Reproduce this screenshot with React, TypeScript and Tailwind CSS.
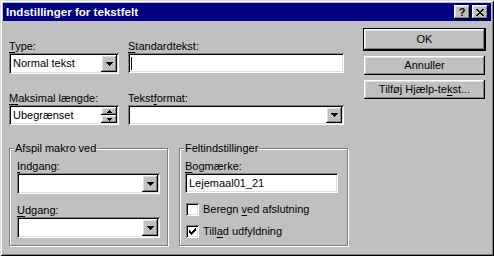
import { ReactElement, ReactNode } from "react";

const raised =
  "shadow-[inset_-1px_-1px_0_#000,inset_1px_1px_0_#fff,inset_-2px_-2px_0_#808080,inset_2px_2px_0_#dfdfdf]";
const sunken =
  "shadow-[inset_1px_1px_0_#808080,inset_-1px_-1px_0_#fff,inset_2px_2px_0_#000,inset_-2px_-2px_0_#dfdfdf]";
const etched = "shadow-[inset_1px_1px_0_#fff,1px_1px_0_#fff]";

const Key = (props: { children: ReactNode }): ReactElement => (
  <span className="underline underline-offset-[2px]">{props.children}</span>
);

const Label = (props: { children: ReactNode; className?: string }): ReactElement => (
  <div className={`leading-[13px] ${props.className ?? ""}`}>{props.children}</div>
);

const DropButton = (): ReactElement => (
  <div className={`flex w-[16px] shrink-0 items-center justify-center bg-[#c0c0c0] ${raised}`}>
    <svg width="7" height="4" viewBox="0 0 7 4" shapeRendering="crispEdges">
      <rect x="0" y="0" width="7" height="1" fill="#000" />
      <rect x="1" y="1" width="5" height="1" fill="#000" />
      <rect x="2" y="2" width="3" height="1" fill="#000" />
      <rect x="3" y="3" width="1" height="1" fill="#000" />
    </svg>
  </div>
);

const SpinButtons = (): ReactElement => (
  <div className="flex w-[16px] shrink-0 flex-col">
    <div className={`flex h-1/2 items-center justify-center bg-[#c0c0c0] ${raised}`}>
      <svg width="5" height="3" viewBox="0 0 5 3" shapeRendering="crispEdges">
        <rect x="2" y="0" width="1" height="1" fill="#000" />
        <rect x="1" y="1" width="3" height="1" fill="#000" />
        <rect x="0" y="2" width="5" height="1" fill="#000" />
      </svg>
    </div>
    <div className={`flex h-1/2 items-center justify-center bg-[#c0c0c0] ${raised}`}>
      <svg width="5" height="3" viewBox="0 0 5 3" shapeRendering="crispEdges">
        <rect x="0" y="0" width="5" height="1" fill="#000" />
        <rect x="1" y="1" width="3" height="1" fill="#000" />
        <rect x="2" y="2" width="1" height="1" fill="#000" />
      </svg>
    </div>
  </div>
);

const Field = (props: { className: string; children?: ReactNode }): ReactElement => (
  <div className={`flex bg-white p-[2px] ${sunken} ${props.className}`}>{props.children}</div>
);

const Check = (props: { checked?: boolean }): ReactElement => (
  <div className={`flex size-[13px] shrink-0 items-center justify-center bg-white ${sunken}`}>
    {props.checked && (
      <svg width="7" height="7" viewBox="0 0 7 7" shapeRendering="crispEdges">
        <rect x="0" y="2" width="1" height="3" fill="#000" />
        <rect x="1" y="3" width="1" height="3" fill="#000" />
        <rect x="2" y="4" width="1" height="3" fill="#000" />
        <rect x="3" y="3" width="1" height="3" fill="#000" />
        <rect x="4" y="2" width="1" height="3" fill="#000" />
        <rect x="5" y="1" width="1" height="3" fill="#000" />
        <rect x="6" y="0" width="1" height="3" fill="#000" />
      </svg>
    )}
  </div>
);

const TitleButton = (props: { children: ReactNode; className?: string }): ReactElement => (
  <div
    className={`flex h-[14px] w-[16px] items-center justify-center bg-[#c0c0c0] ${raised} ${props.className ?? ""}`}
  >
    {props.children}
  </div>
);

const CloseGlyph = (): ReactElement => (
  <svg width="8" height="7" viewBox="0 0 8 7" shapeRendering="crispEdges">
    <path
      d="M0 0h2v1H0zM6 0h2v1H6zM1 1h2v1H1zM5 1h2v1H5zM2 2h4v1H2zM3 3h2v1H3zM2 4h4v1H2zM1 5h2v1H1zM5 5h2v1H5zM0 6h2v1H0zM6 6h2v1H6z"
      fill="#000"
    />
  </svg>
);

const App = (): ReactElement => {
  return (
    <div
      className={`flex h-[256px] w-[494px] flex-col bg-[#c0c0c0] p-[3px] font-['Liberation_Sans',Arial,sans-serif] text-[11px] text-black shadow-[inset_1px_1px_0_#dfdfdf,inset_-1px_-1px_0_#000,inset_2px_2px_0_#fff,inset_-2px_-2px_0_#808080]`}
    >
      <div className="flex h-[18px] shrink-0 items-center bg-[#000080] pl-[3px] pr-[3px]">
        <span className="flex-1 text-[11.6px] font-bold leading-[18px] text-white">
          Indstillinger for tekstfelt
        </span>
        <TitleButton>
          <span className="text-[11px] font-bold leading-none">?</span>
        </TitleButton>
        <TitleButton className="ml-[2px]">
          <CloseGlyph />
        </TitleButton>
      </div>

      <div className="flex">
        <div className="flex w-[339px] flex-col pl-[6px] pt-[19px] box-content">
          <div className="flex gap-[9px]">
            <div className="flex w-[110px] flex-col">
              <Label>
                <Key>T</Key>ype:
              </Label>
              <Field className="h-[21px] w-[110px]">
                <span className="flex-1 pl-[2px] leading-[17px]">Normal tekst</span>
                <DropButton />
              </Field>
              <Label className="mt-[18px]">
                <Key>M</Key>aksimal længde:
              </Label>
              <Field className="h-[20px] w-[110px]">
                <span className="flex-1 pl-[2px] leading-[16px]">Ubegrænset</span>
                <SpinButtons />
              </Field>
            </div>
            <div className="flex w-[216px] flex-col">
              <Label>
                <Key>S</Key>tandardtekst:
              </Label>
              <Field className="h-[20px] w-[216px] items-center">
                <div className="ml-[1px] h-[13px] w-[1px] bg-black" />
              </Field>
              <Label className="mt-[19px]">
                Tekst<Key>f</Key>ormat:
              </Label>
              <Field className="h-[20px] w-[216px]">
                <span className="flex-1" />
                <DropButton />
              </Field>
            </div>
          </div>

          <div className="mt-[23px] flex gap-[11px]">
            <div className={`flex w-[159px] flex-col border border-[#808080] px-[7px] pb-[7px] ${etched}`}>
              <span className="-ml-[3px] -mt-[7px] w-fit bg-[#c0c0c0] px-[1px] leading-[13px]">
                Afspil makro ved
              </span>
              <Label className="mt-[5px]">
                <Key>I</Key>ndgang:
              </Label>
              <Field className="h-[21px] w-[143px]">
                <span className="flex-1" />
                <DropButton />
              </Field>
              <Label className="mt-[10px]">
                <Key>U</Key>dgang:
              </Label>
              <Field className="h-[21px] w-[143px]">
                <span className="flex-1" />
                <DropButton />
              </Field>
            </div>

            <div className={`flex w-[169px] flex-col border border-[#808080] pl-[5px] pr-[9px] pb-[7px] ${etched}`}>
              <span className="-ml-[1px] -mt-[7px] w-fit bg-[#c0c0c0] px-[1px] leading-[13px]">
                Feltindstillinger
              </span>
              <Label className="mt-[5px]">
                <Key>B</Key>ogmærke:
              </Label>
              <Field className="h-[20px] w-[153px]">
                <span className="flex-1 pl-[2px] leading-[16px]">Lejemaal01_21</span>
              </Field>
              <div className="ml-[1px] mt-[10px] flex items-center gap-[4px] leading-[13px]">
                <Check />
                <span>
                  Beregn <Key>v</Key>ed afslutning
                </span>
              </div>
              <div className="ml-[1px] mt-[9px] flex items-center gap-[4px] leading-[13px]">
                <Check checked />
                <span>
                  Till<Key>a</Key>d udfyldning
                </span>
              </div>
            </div>
          </div>
        </div>

        <div className="ml-[15px] flex w-[123px] flex-col pt-[7px]">
          <div
            className={`flex h-[23px] items-center justify-center border border-black bg-[#c0c0c0] leading-none ${raised}`}
          >
            OK
          </div>
          <div
            className={`mx-[1px] mt-[5px] flex h-[19px] items-center justify-center bg-[#c0c0c0] leading-none ${raised}`}
          >
            Annuller
          </div>
          <div
            className={`mx-[1px] mt-[5px] flex h-[19px] items-center justify-center bg-[#c0c0c0] leading-none ${raised}`}
          >
            Tilføj Hjælp-te<Key>k</Key>st...
          </div>
        </div>
      </div>
    </div>
  );
};

export default App;
